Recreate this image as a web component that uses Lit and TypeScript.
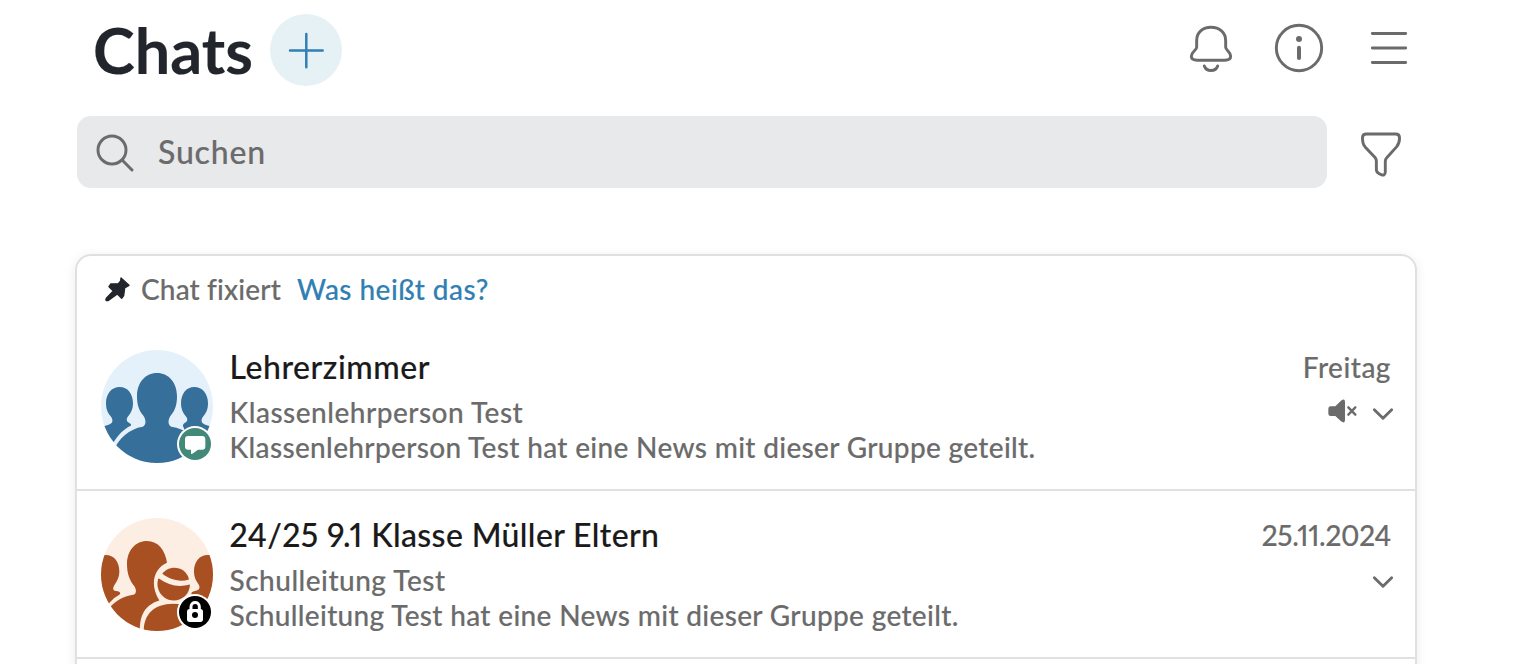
import { LitElement, html, svg, css } from 'lit';
import { classMap } from 'lit/directives/class-map.js';

interface Chat {
  title: string;
  sender: string;
  message: string;
  date: string;
  muted: boolean;
  kind: 'staff' | 'parents';
}

const CHATS: Chat[] = [
  {
    title: 'Lehrerzimmer',
    sender: 'Klassenlehrperson Test',
    message: 'Klassenlehrperson Test hat eine News mit dieser Gruppe geteilt.',
    date: 'Freitag',
    muted: true,
    kind: 'staff'
  },
  {
    title: '24/25 9.1 Klasse Müller Eltern',
    sender: 'Schulleitung Test',
    message: 'Schulleitung Test hat eine News mit dieser Gruppe geteilt.',
    date: '25.11.2024',
    muted: false,
    kind: 'parents'
  }
];

export class ChatAvatar extends LitElement {
  static styles = css`
    :host {
      display: block;
      width: 112px;
      height: 113px;
    }

    svg {
      display: block;
      width: 112px;
      height: 113px;
    }
  `;

  static properties = {
    kind: { type: String }
  };

  declare kind: 'staff' | 'parents';

  constructor() {
    super();
    this.kind = 'staff';
  }

  private _staff() {
    return svg`
      <g clip-path="url(#round)">
        <rect x="33" y="29" width="336" height="340" fill="#e4f1fb" />
        <g fill="#376f9b">
          <path d="M89 140C113 140 129 160 129 189C129 208 122 219 114 229C107 238 110 246 120 250Q126 253 121 258C100 268 85 285 71 306L20 306V262Q62 255 66 247C69 239 66 234 61 227C53 217 48 207 48 189C48 160 65 140 89 140Z" />
          <path d="M313 140C337 140 354 160 354 189C354 207 349 217 341 227C336 234 333 239 336 247Q340 255 382 262V330H300L281 262Q276 255 282 250C292 246 295 238 288 229C280 219 273 208 273 189C273 160 289 140 313 140Z" />
          <path d="M201 98C237 98 261 128 261 168C261 196 254 212 243 225C233 237 233 256 244 260C285 266 322 292 335 335V380H70V332C86 296 118 266 158 260C169 256 169 237 159 225C148 212 141 196 141 168C141 128 165 98 201 98Z" />
        </g>
      </g>
      <circle cx="315" cy="312" r="54" fill="#fff" />
      <circle cx="315" cy="312" r="48" fill="#43897a" />
      <path fill="#fff" d="M295 288H336Q346 288 346 298V319Q346 329 336 329H324L306 342Q303 343 303 339V329H295Q285 329 285 319V298Q285 288 295 288Z" />
    `;
  }

  private _parents() {
    return svg`
      <g clip-path="url(#round)">
        <rect x="33" y="29" width="336" height="340" fill="#fceee3" />
        <g fill="#a85022">
          <path d="M47 140C72 140 88 160 88 189C88 207 81 219 73 231C67 241 69 247 78 249C89 250 94 255 88 260Q70 269 56 286L20 306V140Z" />
          <path d="M353 140C329 140 312 160 312 189C312 207 318 217 326 229C332 240 327 247 314 249Q304 251 304 257L320 300H390V140Z" />
          <path d="M171 98C205 98 226 126 231 164C193 180 177 229 208 277C170 289 146 315 150 380H33V325L61 296C77 280 98 264 130 260C140 258 140 244 132 233C119 216 111 196 111 168C111 128 135 98 171 98Z" />
          <path d="M217 197C237 169 287 173 297 214C268 223 239 214 217 197Z" />
          <path d="M208 212C236 233 267 238 300 229C299 257 278 277 251 277C219 277 196 246 204 214Q205 210 208 212Z" />
          <path d="M162 380C156 327 186 287 250 287C290 287 320 305 334 330V380Z" />
        </g>
      </g>
      <circle cx="315" cy="312" r="54" fill="#fff" />
      <circle cx="315" cy="312" r="48" fill="#000" />
      <path fill="none" stroke="#fff" stroke-width="9" d="M303 309V296C303 279 328 279 328 296V309" />
      <rect x="291" y="303" width="48" height="39" rx="8" fill="#fff" />
      <circle cx="315" cy="321" r="9" fill="#000" />
    `;
  }

  render() {
    return html`
      <svg viewBox="33 29 336 340" preserveAspectRatio="none">
        <clipPath id="round"><ellipse cx="201" cy="199" rx="168" ry="170" /></clipPath>
        ${this.kind === 'staff' ? this._staff() : this._parents()}
      </svg>
    `;
  }
}

export class ChatRow extends LitElement {
  static styles = css`
    :host {
      display: block;
    }

    .row {
      display: flex;
      box-sizing: border-box;
      height: 166px;
      padding: 0 22px 0 24px;
    }

    .avatar {
      padding-top: 27px;
    }

    .text {
      flex: 1;
      min-width: 0;
      padding: 24px 0 0 16.5px;
      white-space: nowrap;
    }

    .title {
      font-size: 32px;
      line-height: 40px;
      font-weight: 500;
      color: #1a1a1a;
      margin-bottom: 8px;
      letter-spacing: 0.55px;
      font-variant-numeric: proportional-nums;
    }

    .line {
      font-size: 28px;
      line-height: 35px;
      letter-spacing: 0.34px;
    }

    .sender {
      letter-spacing: 0.5px;
    }

    .meta {
      display: flex;
      flex-direction: column;
      align-items: flex-end;
      padding-top: 27px;
    }

    .date {
      font-size: 28px;
      line-height: 35px;
      padding-right: 2px;
      letter-spacing: 0.5px;
      font-variant-numeric: proportional-nums;
    }

    .date.numeric {
      letter-spacing: -0.3px;
    }

    .title.numeric {
      letter-spacing: 0.37px;
    }

    .state {
      display: flex;
      align-items: center;
      gap: 16px;
      height: 24px;
      margin-top: 14px;
    }

    .mute {
      width: 29px;
      height: 24px;
      padding-bottom: 1px;
    }

    .chevron {
      width: 20px;
      height: 12px;
      padding-top: 5px;
      overflow: visible;
    }
  `;

  static properties = {
    chat: { attribute: false }
  };

  declare chat: Chat;

  render() {
    const { title, sender, message, date, muted, kind } = this.chat;

    // Text starting with digits is set a little tighter
    const titleClasses = { title: true, numeric: /^\d/.test(title) };
    const dateClasses = { date: true, numeric: /^\d/.test(date) };

    return html`
      <div class="row">
        <div class="avatar"><chat-avatar kind=${kind}></chat-avatar></div>
        <div class="text">
          <div class=${classMap(titleClasses)}>${title}</div>
          <div class="line sender">${sender}</div>
          <div class="line">${message}</div>
        </div>
        <div class="meta">
          <div class=${classMap(dateClasses)}>${date}</div>
          <div class="state">
            ${muted ? html`
              <svg class="mute" viewBox="263 175 87 72">
                <path fill="#6b6b6b" d="M271 197H285L302 180Q314 172 314 184V238Q314 250 302 242L285 226H271Q264 226 264 219V204Q264 197 271 197Z" />
                <path fill="none" stroke="#6b6b6b" stroke-width="7" stroke-linecap="round" d="M324 200L345 222M345 200L324 222" />
              </svg>
            ` : ''}
            <svg class="chevron" viewBox="399 203 60 36">
              <path fill="none" stroke="#6b6b6b" stroke-width="8.5" stroke-linecap="round" stroke-linejoin="round" d="M403 208L429 234L455 208" />
            </svg>
          </div>
        </div>
      </div>
    `;
  }
}

export class AppRoot extends LitElement {
  static styles = css`
    :host {
      display: block;
      box-sizing: border-box;
      height: 664px;
      overflow: hidden;
      background: #fff;
      color: #6b6b6b;
      font-family: Lato, sans-serif;
      font-weight: 500;
      -webkit-text-stroke: 0.15px currentColor;
    }

    header {
      display: flex;
      align-items: center;
      height: 72px;
      padding: 14px 107px 0 93px;
    }

    h1 {
      margin: 0;
      width: 177px;
      font-size: 63px;
      line-height: 72px;
      font-weight: 700;
      color: #22262c;
      white-space: nowrap;
    }

    .add {
      width: 72px;
      height: 72px;
      padding: 0;
      border: none;
      border-radius: 50%;
      background: #e6f1f6;
    }

    .add svg {
      display: block;
      width: 72px;
      height: 72px;
    }

    .actions {
      display: flex;
      gap: 42px;
      margin-left: auto;
      padding-bottom: 4px;
    }

    .actions svg {
      display: block;
      height: 48px;
      overflow: visible;
    }

    .bell {
      width: 44px;
    }

    .info {
      width: 48px;
    }

    .menu {
      width: 36px;
      margin-left: 6px;
    }

    .stroke {
      fill: none;
      stroke: #6b6b6b;
      stroke-width: 8.8;
      stroke-linecap: round;
      stroke-linejoin: round;
    }

    .tools {
      display: flex;
      align-items: center;
      gap: 34px;
      padding: 30px 113px 0 77px;
    }

    .search {
      display: flex;
      flex: 1;
      align-items: center;
      gap: 24px;
      height: 72px;
      box-sizing: border-box;
      padding-left: 19px;
      border-radius: 14px;
      background: #e8e9eb;
      font-size: 32px;
      letter-spacing: 0.8px;
    }

    .search svg {
      width: 38px;
      height: 38px;
      padding-top: 2px;
    }

    .search span {
      padding-bottom: 2px;
    }

    .filter {
      width: 40px;
      height: 45px;
      padding-top: 4px;
      overflow: visible;
    }

    .card {
      margin: 66px 97px 0 75px;
      height: 500px;
      border: 2px solid #e0e0e0;
      border-radius: 16px;
      box-shadow: 0 2px 12px rgba(0, 0, 0, 0.08);
    }

    .pinned {
      display: flex;
      align-items: center;
      height: 67px;
      padding-left: 28px;
      font-size: 28px;
      letter-spacing: 0.15px;
    }

    .pinned svg {
      width: 25px;
      height: 25px;
      margin-right: 11px;
    }

    .pinned span,
    .pinned a {
      padding-bottom: 2px;
    }

    .pinned a {
      margin-left: 16px;
      color: #327fb3;
      letter-spacing: 0.45px;
    }

    chat-row {
      border-bottom: 2px solid #e0e0e0;
    }
  `;

  render() {
    return html`
      <header>
        <h1>Chats</h1>
        <button class="add" aria-label="Neuer Chat">
          <svg viewBox="0 0 72 72">
            <path fill="none" stroke="#327fb3" stroke-width="2.5" stroke-linecap="round" d="M36.3 20V53.2M20 36.5H52.7" />
          </svg>
        </button>
        <div class="actions">
          <svg class="bell" viewBox="57 42 132 144">
            <path class="stroke" d="M80 92C80 67 98 52 123 52C148 52 167 67 167 92V112C167 121 182 125 182 139C182 149 174 151 164 151H82C72 151 64 149 64 139C64 125 80 121 80 112Z" />
            <path class="stroke" d="M103 168C109 186 137 186 143 168" />
          </svg>
          <svg class="info" viewBox="315 42 144 144">
            <circle class="stroke" cx="387" cy="114" r="68" />
            <circle cx="387" cy="87" r="9" fill="#6b6b6b" />
            <path fill="none" stroke="#6b6b6b" stroke-width="12" stroke-linecap="round" d="M387 113V144" />
          </svg>
          <svg class="menu" viewBox="603 42 108 144">
            <path class="stroke" d="M607 70.5H707M607 114H707M607 157.5H707" />
          </svg>
        </div>
      </header>
      <div class="tools">
        <div class="search">
          <svg viewBox="78 102 114 114">
            <circle class="stroke" cx="126" cy="150" r="42" />
            <path class="stroke" d="M157 181L186 210" />
          </svg>
          <span>Suchen</span>
        </div>
        <svg class="filter" viewBox="573 364 120 136">
          <path class="stroke" d="M577 382C577 374 582 370 589 370H677C684 370 689 374 689 382C689 396 686 402 680 409L651 441C647 445 646 448 646 453V485C646 493 641 496 634 493L626 489C621 486 619 482 619 477V453C619 448 618 445 615 441L585 409C579 402 577 396 577 382Z" />
        </svg>
      </div>
      <div class="card">
        <div class="pinned">
          <svg viewBox="104 98 75 75">
            <path fill="#22262c" stroke="#22262c" stroke-width="4" stroke-linejoin="round" d="M152 101L176 123L163 131L160 154L154 162L141 149L113 169Q104 170 108 162L129 140L116 127L121 119L144 118L151 110Z" />
          </svg>
          <span>Chat fixiert</span>
          <a>Was heißt das?</a>
        </div>
        ${CHATS.map(chat => html`<chat-row .chat=${chat}></chat-row>`)}
      </div>
    `;
  }
}

customElements.define('chat-avatar', ChatAvatar);
customElements.define('chat-row', ChatRow);
customElements.define('app-root', AppRoot);
